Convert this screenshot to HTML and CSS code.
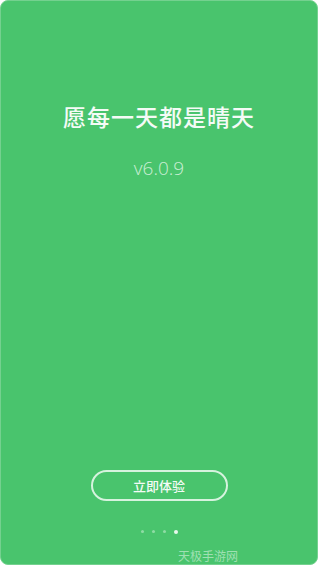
FILE: index.html
```html
<!DOCTYPE html>
<html lang="zh">
<head>
<meta charset="utf-8">
<title>愿每一天都是晴天</title>
<link rel="stylesheet" href="styles.css">
</head>
<body>
<div class="screen">
  <h1 class="title">愿每一天都是晴天</h1>
  <div class="version">v6.0.9</div>
  <button class="start">立即体验</button>
  <div class="dots">
    <span class="dot"></span>
    <span class="dot"></span>
    <span class="dot"></span>
    <span class="dot active"></span>
  </div>
  <div class="mark">天极手游网</div>
</div>
</body>
</html>
```
FILE: styles.css
```css
html, body {
  margin: 0;
  padding: 0;
  background: #ffffff;
}
.screen {
  width: 318px;
  height: 565px;
  box-sizing: border-box;
  background: #49c46d;
  border: 1px solid #74d18f;
  border-radius: 8px;
  overflow: hidden;
  display: flex;
  flex-direction: column;
  align-items: center;
  font-family: "Noto Sans CJK SC", "Open Sans", sans-serif;
  color: #ffffff;
}
.title {
  margin: 100px 0 0;
  font-size: 23px;
  line-height: 30px;
  font-weight: 500;
  letter-spacing: 1px;
  color: #f4fbf6;
}
.version {
  margin-top: 25px;
  font-family: "Open Sans", sans-serif;
  font-weight: 300;
  font-size: 19px;
  line-height: 24px;
  color: #c9eed4;
}
.start {
  margin-top: 290px;
  width: 137px;
  height: 33px;
  box-sizing: border-box;
  border: 2px solid #d6f3de;
  border-radius: 17px;
  background: transparent;
  color: #f4fbf6;
  font-family: "Noto Sans CJK SC", sans-serif;
  font-size: 13px;
  font-weight: 500;
  padding: 0;
}
.dots {
  margin-top: 28px;
  display: flex;
  align-items: center;
  gap: 8px;
  height: 5px;
}
.dot {
  width: 3px;
  height: 3px;
  border-radius: 50%;
  background: #8fdca5;
}
.dot.active {
  width: 4px;
  height: 4px;
  background: #e8f8ed;
}
.mark {
  margin-top: 14px;
  align-self: flex-end;
  margin-right: 79px;
  font-size: 12px;
  line-height: 16px;
  color: #9fe0b3;
}
```
